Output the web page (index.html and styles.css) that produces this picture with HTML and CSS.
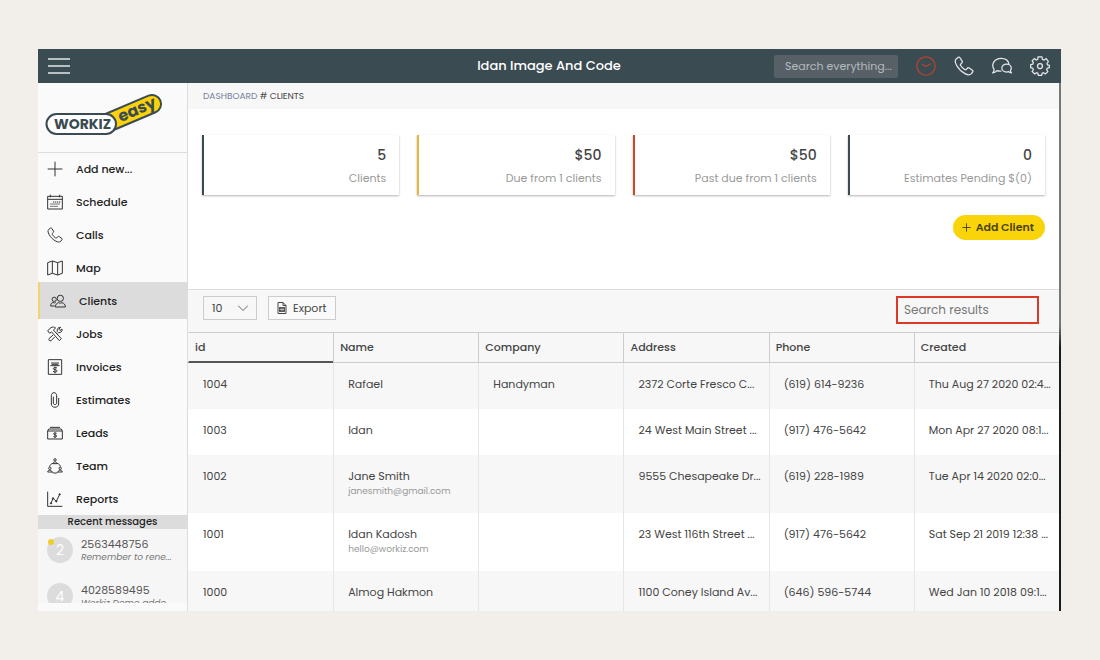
FILE: index.html
```html
<!DOCTYPE html>
<html lang="en">
<head>
<meta charset="UTF-8" />
<meta name="viewport" content="width=device-width, initial-scale=1" />
<title>Clients</title>
<link rel="stylesheet" href="styles.css">
</head>
<body>

<!-- Shared icons -->
<svg class="sprite" aria-hidden="true">
  <symbol id="phone" viewBox="0 0 24 24">
    <path d="M5.2 1.6 L2.6 3.6 C1 5 1.3 8 3.2 11.4 C5.6 15.6 9 19 13.2 21.2 C16.4 22.9 19 23 20.6 21.4 L22.4 19.2 C23 18.4 22.9 17.6 22.1 17 L18.2 14.4 C17.4 13.9 16.6 14 16 14.7 L14.6 16.3 C14 16.8 13.4 16.8 12.7 16.3 C10.8 15 9.2 13.3 8 11.4 C7.5 10.6 7.5 10 8.1 9.5 L9.5 8.2 C10.1 7.6 10.2 6.9 9.7 6.1 L7.2 2.1 C6.7 1.3 6 1.1 5.2 1.6 Z"/>
  </symbol>
  <symbol id="plus" viewBox="0 0 24 24">
    <path d="M12 1 V23 M1 12 H23"/>
  </symbol>
</svg>

<div class="window">
  <header class="topbar">
    <button class="icon-btn menu-btn" aria-label="Menu">
      <svg viewBox="0 0 22 16"><path d="M0 1 H22 M0 8 H22 M0 15 H22"/></svg>
    </button>
    <h1 class="title">Idan Image And Code</h1>
    <div class="topbar-tools">
      <input class="search-all" type="text" placeholder="Search everything..." aria-label="Search everything" />
      <button class="icon-btn clock" aria-label="Time clock">
        <svg viewBox="0 0 24 24"><circle cx="12" cy="12" r="11"/><path d="M7 9.5 L12 12.5 L17.5 9.2"/></svg>
      </button>
      <button class="icon-btn" aria-label="Phone">
        <svg><use href="#phone"/></svg>
      </button>
      <button class="icon-btn" aria-label="Messages">
        <svg viewBox="0 0 24 24">
          <path d="M11.4 18 C9.4 18.4 7.6 18.2 6 17.6 C4.6 19.3 2.9 20.2 0.8 20.3 C2 19.2 2.6 17.8 2.5 16 C1.2 14.4 0.8 12.7 0.9 10.7 C1.3 6 5.4 2.8 10.7 2.8 C16 2.8 19.7 5.6 20.3 9.6"/>
          <path d="M17.4 9.7 C14.2 9.7 11.8 11.8 11.8 14.5 C11.8 17.2 14.2 19.2 17.4 19.2 C18.4 19.2 19.2 19 19.9 18.7 C20.8 19.7 21.9 20.2 23.3 20.3 C22.5 19.4 22.1 18.4 22.2 17.2 C22.8 16.4 23.1 15.5 23.1 14.5 C23.1 11.8 20.6 9.7 17.4 9.7 Z"/>
        </svg>
      </button>
      <button class="icon-btn" aria-label="Settings">
        <svg viewBox="0 0 24 24">
          <path d="M9.7 1 H14.3 L14.9 4.1 L16.8 4.9 L19.4 3.1 L22 6.6 L20.4 9 L21 10.6 L23.2 11 V14 L20.7 14.6 L20 16.3 L21.4 18.8 L18.4 21.6 L16.2 20 L14.6 20.7 L14 23.2 H10 L9.4 20.7 L7.8 20 L5.6 21.6 L2.6 18.6 L4 16.3 L3.3 14.6 L0.8 14 V10.4 L3.3 9.8 L4 8 L2.6 5.7 L5.2 3 L7.4 4.8 L9.2 4.1 Z"/>
          <circle cx="12" cy="12" r="3"/>
        </svg>
      </button>
    </div>
  </header>

  <div class="content">
    <aside class="sidebar">
      <div class="logo">
        <svg viewBox="0 0 120 42" role="img" aria-label="Workiz Easy">
          <g transform="rotate(-23 62 29.5)">
            <rect class="logo-easy" x="53" y="20.5" width="68" height="18" rx="9"/>
            <text class="logo-easy-text" x="76" y="34">easy</text>
          </g>
          <rect class="logo-workiz" x="2.5" y="20" width="69.5" height="20" rx="10"/>
          <text class="logo-workiz-text" x="10" y="35">WORKIZ</text>
        </svg>
      </div>

      <nav class="menu">
        <a href="#"><svg><use href="#plus"/></svg>Add new...</a>
        <a href="#">
          <svg viewBox="0 0 24 24"><path d="M1 3.5 H23 V22.5 H1 Z M1 8 H23 M5 1 V5 M19 1 V5"/><path stroke-dasharray="2 1" d="M9 12 H20 M5 15 H20 M5 18.5 H17"/></svg>
          Schedule
        </a>
        <a href="#"><svg><use href="#phone"/></svg>Calls</a>
        <a href="#">
          <svg viewBox="0 0 24 24"><path d="M1 4 L8 1.5 L16 4 L23 1.5 V20 L16 22.5 L8 20 L1 22.5 Z M8 1.5 V20 M16 4 V22.5"/></svg>
          Map
        </a>
        <a href="#" class="active">
          <svg viewBox="0 0 24 24"><circle cx="15.5" cy="8" r="4.7"/><path d="M8 21 C8 17 10 15.5 13 14.5 C14.5 15.5 16.5 15.5 18 14.5 C21 15.5 23 17 23 21 Z"/><circle cx="6.3" cy="9.5" r="3.2"/><path d="M7 19.5 H1 C1 16.5 2 15 4.6 14.2 C6 15 7.2 15 8.6 14.2"/></svg>
          Clients
        </a>
        <a href="#">
          <svg viewBox="0 0 24 24"><path d="M1 7 L6 2.5 C9 1 11 1.5 13 3 L9.5 6 L21.5 19 L18.5 22 L6.800 8.8 L4 11 Z"/><path d="M14 9.5 L15.5 8 C14.5 4.5 17 1.5 20.5 2 L17.8 4.8 L19.5 6.8 L22.5 4.5 C23.5 8 20.5 10.5 17.5 9.8 L16 11.5 M11.5 16.5 L6 22.2 C4 23 2 21 3 19 L9 13.5"/></svg>
          Jobs
        </a>
        <a href="#">
          <svg viewBox="0 0 24 24"><path d="M2 1 H22 V23 H2 Z M6 6 H18 M5 10 H19 M7 8 H17"/><path d="M15 13.5 C12 12 9 13 9.5 14.8 C10 16.5 15 15.5 15 17.8 C15 20 11 20 9 18.5 M12 11.5 V21.5"/></svg>
          Invoices
        </a>
        <a href="#">
          <svg viewBox="0 0 24 24"><path d="M9.500 7 V16.5 C9.5 19.500 14.5 19.500 14.5 16.5 V6 M6.500 8 V18 C6.500 24.500 17.500 24.500 17.500 18 V9 M6.500 8 V5.500 C6.500 -0.500 14.500 -0.500 14.500 5.500 V7"/></svg>
          Estimates
        </a>
        <a href="#">
          <svg viewBox="0 0 24 24"><path d="M1 9 H23 V21 H1 Z M2.5 6 H21.5 M4.5 3.5 H19.5 M2.5 6 L1 9 M21.5 6 L23 9"/><path d="M14.5 12.5 C12 11.5 9.8 12 9.8 13.5 C10 15 14.5 14.6 14.5 16.5 C14.5 18.3 11.5 18.5 9.5 17.3 M12 11 V19.5"/></svg>
          Leads
        </a>
        <a href="#">
          <svg viewBox="0 0 24 24"><circle cx="12" cy="2.8" r="1.8"/><path d="M9 8.500 C9.300 5 14.700 5 15 8.500 Z M9 8 C5.500 9 4 11 4 13 M15 8 C18.500 9 20 11 20 13 M7.5 21 C10 23.300 14 23.300 16.5 21"/><circle cx="4.2" cy="15.5" r="1.8"/><path d="M1 21 C1.300 17.500 7.200 17.500 7.500 21 Z"/><circle cx="19.8" cy="15.5" r="1.8"/><path d="M16.5 21 C16.800 17.500 22.700 17.500 23 21 Z"/></svg>
          Team
        </a>
        <a href="#">
          <svg viewBox="0 0 24 24"><path d="M1 1 V23 H23 M6 18.500 L9 11 L14 15.5 L19 5"/><g class="dots"><circle cx="6" cy="18.5" r="1"/><circle cx="9" cy="11" r="1"/><circle cx="14" cy="15.5" r="1"/><circle cx="19" cy="5" r="1"/></g></svg>
          Reports
        </a>
      </nav>

      <h2 class="messages-title">Recent messages</h2>
      <div class="messages">
        <div class="message">
          <div class="avatar unread">2</div>
          <div>
            <div class="message-from">2563448756</div>
            <div class="message-text">Remember to rene...</div>
          </div>
        </div>
        <div class="message">
          <div class="avatar">4</div>
          <div>
            <div class="message-from">4028589495</div>
            <div class="message-text">Workiz Demo adde...</div>
          </div>
        </div>
      </div>
    </aside>

    <main class="main">
      <div class="breadcrumb"><a href="#">DASHBOARD</a> # CLIENTS</div>

      <section class="cards">
        <div class="card">
          <div class="card-value">5</div>
          <div class="card-label">Clients</div>
        </div>
        <div class="card yellow">
          <div class="card-value">$50</div>
          <div class="card-label">Due from 1 clients</div>
        </div>
        <div class="card red">
          <div class="card-value">$50</div>
          <div class="card-label">Past due from 1 clients</div>
        </div>
        <div class="card">
          <div class="card-value">0</div>
          <div class="card-label">Estimates Pending $(0)</div>
        </div>
      </section>

      <div class="actions">
        <button class="add-client"><svg><use href="#plus"/></svg>Add Client</button>
      </div>

      <div class="table-tools">
        <select class="page-size" aria-label="Rows per page">
          <option>10</option>
          <option>25</option>
          <option>50</option>
        </select>
        <button class="export">
          <svg viewBox="0 0 20 24"><path d="M2 1 H12 L18 7 V23 H2 Z M12 1 V7 H18"/><path class="sheet" d="M5 11 H15 V19 H5 Z"/><path class="sheet-lines" d="M5 15 H15 M8.5 11 V19 M12 11 V19"/></svg>
          Export
        </button>
        <input class="search-results" type="text" placeholder="Search results" aria-label="Search results" />
      </div>

      <table class="clients">
        <thead>
          <tr>
            <th class="sorted">id</th>
            <th>Name</th>
            <th>Company</th>
            <th>Address</th>
            <th>Phone</th>
            <th>Created</th>
          </tr>
        </thead>
        <tbody>
          <tr>
            <td>1004</td>
            <td>Rafael</td>
            <td>Handyman</td>
            <td>2372 Corte Fresco C...</td>
            <td>(619) 614-9236</td>
            <td>Thu Aug 27 2020 02:4...</td>
          </tr>
          <tr>
            <td>1003</td>
            <td>Idan</td>
            <td></td>
            <td>24 West Main Street ...</td>
            <td>(917) 476-5642</td>
            <td>Mon Apr 27 2020 08:1...</td>
          </tr>
          <tr>
            <td>1002</td>
            <td>Jane Smith<div class="email">janesmith@gmail.com</div></td>
            <td></td>
            <td>9555 Chesapeake Dr...</td>
            <td>(619) 228-1989</td>
            <td>Tue Apr 14 2020 02:0...</td>
          </tr>
          <tr>
            <td>1001</td>
            <td>Idan Kadosh<div class="email">hello@workiz.com</div></td>
            <td></td>
            <td>23 West 116th Street ...</td>
            <td>(917) 476-5642</td>
            <td>Sat Sep 21 2019 12:38 ...</td>
          </tr>
          <tr>
            <td>1000</td>
            <td>Almog Hakmon</td>
            <td></td>
            <td>1100 Coney Island Av...</td>
            <td>(646) 596-5744</td>
            <td>Wed Jan 10 2018 09:1...</td>
          </tr>
        </tbody>
      </table>
    </main>
  </div>
</div>

</body>
</html>
```
FILE: styles.css
```css
* {
  box-sizing: border-box;
}
body {
  margin: 0;
  padding: 49px 39px 49px 38px;
  height: 100vh;
  background: #f2efea;
  color: #444;
  font-family: Poppins, Inter, sans-serif;
  font-size: 11px;
  line-height: 16px;
}
button,
input,
select {
  font-family: inherit;
  color: inherit;
  margin: 0;
}
button {
  cursor: pointer;
}
a {
  color: inherit;
  text-decoration: none;
}
svg {
  fill: none;
  stroke: currentColor;
}
.sprite {
  position: absolute;
  width: 0;
  height: 0;
}
.window {
  display: flex;
  flex-direction: column;
  height: 100%;
  overflow: hidden;
}

/* Top bar */
.topbar {
  display: grid;
  grid-template-columns: 1fr auto 1fr;
  align-items: center;
  flex: none;
  height: 34px;
  padding: 0 11px 0 10px;
  background: #3b4b52;
  color: #fff;
}
.title {
  margin: 0;
  font-size: 13px;
  font-weight: 500;
}
.topbar-tools {
  display: flex;
  align-items: center;
  justify-content: flex-end;
  gap: 18px;
}
.icon-btn {
  display: flex;
  padding: 0;
  border: none;
  background: none;
  color: #e4e8ea;
}
.icon-btn svg {
  width: 20px;
  height: 20px;
  stroke-width: 1.5;
}
.menu-btn svg {
  width: 22px;
  height: 16px;
}
.icon-btn.clock {
  color: #b5432f;
}
.search-all {
  width: 124px;
  height: 23px;
  padding: 0 6px 0 11px;
  border: none;
  border-radius: 2px;
  background: #586067;
  font-size: 11px;
}
.search-all::placeholder {
  color: #b4babd;
  opacity: 1;
}

/* Layout */
.content {
  display: flex;
  flex: 1;
  min-height: 0;
  border-right: 2px solid;
  border-image: linear-gradient(#777 0, #777 46%, #1c1c1c 50%) 1;
}
.sidebar {
  display: flex;
  flex-direction: column;
  flex: none;
  width: 150px;
  padding-bottom: 8px;
  border-right: 1px solid #ddd;
  background: #fafafa;
}
.main {
  flex: 1;
  min-width: 0;
  overflow: hidden;
  background: #fff;
}

/* Sidebar */
.logo {
  flex: none;
  height: 70px;
  padding: 11px 6px;
  border-bottom: 1px solid #ddd;
}
.logo svg {
  display: block;
  width: 120px;
  height: 42px;
  overflow: visible;
}
.logo-easy,
.logo-workiz {
  stroke: #3b4b52;
  stroke-width: 2;
}
.logo-easy {
  fill: #fbd20b;
}
.logo-workiz {
  fill: #fff;
}
.logo-easy-text,
.logo-workiz-text {
  fill: #3b4b52;
  stroke: none;
  font-weight: 700;
}
.logo-easy-text {
  font-size: 16px;
}
.logo-workiz-text {
  font-size: 14px;
}
.menu {
  flex: none;
  margin-top: -1px;
}
.menu a {
  display: flex;
  align-items: center;
  gap: 13px;
  height: 33px;
  padding-left: 9px;
  color: #222;
  font-size: 11px;
  font-weight: 500;
}
.menu svg {
  width: 16px;
  height: 16px;
  stroke: #333;
  stroke-width: 1.5;
}
.menu .dots {
  fill: #333;
}
.menu a.active {
  height: 37px;
  margin: -2px 0;
  border-left: 2px solid #f3d36b;
  padding-left: 10px;
  background: #dcdcdc;
}
.messages-title {
  flex: none;
  margin: 0;
  background: #dcdcdc;
  color: #222;
  font-size: 10px;
  font-weight: 500;
  line-height: 14px;
  text-align: center;
}
.messages {
  flex: 1;
  min-height: 0;
  overflow: hidden;
  background: #f6f6f6;
}
.message {
  display: flex;
  gap: 8px;
  height: 46px;
  padding: 8px 9px 0;
}
.avatar {
  position: relative;
  flex: none;
  width: 26px;
  height: 26px;
  border-radius: 50%;
  background: #dcdcdc;
  color: #fff;
  font-size: 14px;
  line-height: 26px;
  text-align: center;
}
.avatar.unread::before {
  content: "";
  position: absolute;
  top: 2px;
  left: 1px;
  width: 6px;
  height: 6px;
  border-radius: 50%;
  background: #f0cd2a;
}
.message-from {
  color: #555;
  font-size: 11px;
  line-height: 14px;
}
.message-text {
  color: #777;
  font-size: 9px;
  font-style: italic;
  line-height: 12px;
  white-space: nowrap;
}

/* Summary cards */
.breadcrumb {
  padding: 5px 15px;
  background: #f7f7f7;
  font-size: 9px;
}
.breadcrumb a {
  color: #75839b;
}
.cards {
  display: grid;
  grid-template-columns: repeat(4, 1fr);
  gap: 18px;
  padding: 26px 14px 0;
}
.card {
  height: 60px;
  padding: 10px 13px;
  border-left: 2px solid #3b4b52;
  background: #fff;
  box-shadow: 0 1px 2px rgb(0 0 0 / 0.3);
  text-align: right;
}
.card.yellow {
  border-left-color: #e5b73b;
}
.card.red {
  border-left-color: #d2442c;
}
.card-value {
  font-size: 14px;
  font-weight: 500;
  line-height: 20px;
}
.card-label {
  margin-top: 5px;
  color: #999;
  font-size: 11px;
}
.actions {
  display: flex;
  justify-content: flex-end;
  padding: 20px 14px 49px;
}
.add-client {
  display: flex;
  align-items: center;
  gap: 5px;
  height: 25px;
  padding: 0 11px 0 9px;
  border: none;
  border-radius: 13px;
  background: #fad40a;
  color: #4a4210;
  font-size: 11px;
  font-weight: 600;
}
.add-client svg {
  width: 9px;
  height: 9px;
  stroke-width: 2.5;
}

/* Clients table */
.table-tools {
  display: flex;
  align-items: flex-start;
  gap: 11px;
  height: 43px;
  padding: 6px 20px 0 15px;
  border-top: 1px solid #ddd;
  background: #f7f7f7;
}
.page-size,
.export {
  height: 24px;
  border: 1px solid #ccc;
  border-radius: 0;
  font-size: 11px;
}
.page-size {
  appearance: none;
  width: 54px;
  padding: 0 8px;
  background: #f7f7f7 url("data:image/svg+xml,%3Csvg xmlns='http://www.w3.org/2000/svg' viewBox='0 0 10 6' fill='none' stroke='%23666'%3E%3Cpath d='M0 0.5 L5 5.5 L10 0.5'/%3E%3C/svg%3E") no-repeat right 8px center / 10px 6px;
}
.export {
  display: flex;
  align-items: center;
  gap: 6px;
  padding: 0 8px;
  background: #fafafa;
}
.export svg {
  width: 10px;
  height: 12px;
  stroke-width: 2;
}
.export .sheet {
  fill: currentColor;
}
.export .sheet-lines {
  stroke: #fafafa;
  stroke-width: 1;
}
.search-results {
  width: 143px;
  height: 28px;
  margin-left: auto;
  padding: 0 6px;
  border: 2px solid #dc3a26;
  background: #f7f7f7;
  font-size: 12px;
}
.search-results::placeholder {
  color: #777;
  opacity: 1;
}
.clients {
  width: 100%;
  border-collapse: separate;
  border-spacing: 0;
  table-layout: fixed;
}
.clients th {
  height: 31px;
  padding: 0 6px 1px;
  border-top: 1px solid #ccc;
  border-bottom: 1px solid #ccc;
  border-left: 1px solid #ccc;
  background: #f7f7f7;
  font-size: 11px;
  font-weight: 500;
  text-align: left;
}
.clients th.sorted {
  border-bottom: 2px solid #555;
}
.clients td {
  height: 46px;
  padding: 13px 0 15px 14px;
  border-left: 1px solid #e6e6e6;
  vertical-align: top;
  white-space: nowrap;
}
.clients th:first-child,
.clients td:first-child {
  border-left-color: transparent;
}
.clients tbody tr:nth-child(odd) {
  background: #f7f7f7;
}
.email {
  color: #999;
  font-size: 9px;
  line-height: 14px;
}
```
